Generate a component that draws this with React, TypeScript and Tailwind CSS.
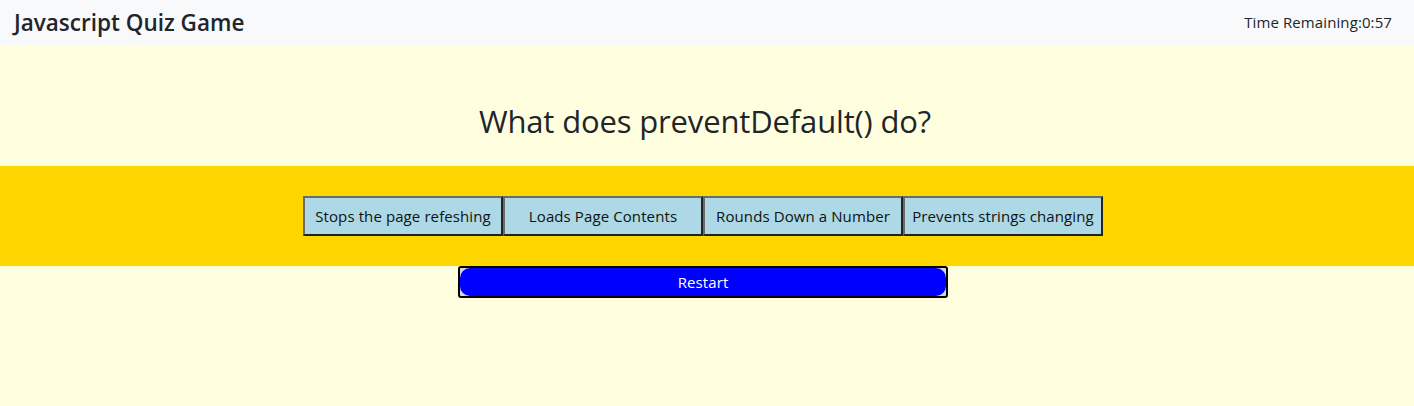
import React, { useState } from 'react';

const answers = [
  'Stops the page refeshing',
  'Loads Page Contents',
  'Rounds Down a Number',
  'Prevents strings changing',
];

const App: React.FC = () => {
  const [time] = useState('0:57');

  return (
    <div className="min-h-[406px] bg-[#ffffe0] text-[#212529] font-['Open_Sans','Noto_Sans',sans-serif]">
      {/* Navbar */}
      <nav className="h-[45px] bg-[#f8f9fa] flex items-center justify-between pl-[14px] pr-[22px]">
        <span className="text-[22.5px] font-semibold">Javascript Quiz Game</span>
        <span className="text-[15px] font-medium tracking-[0.1px]">Time Remaining:{time}</span>
      </nav>

      {/* Question */}
      <div className="h-[121px] pt-[32px] flex items-center justify-center pr-[4px]">
        <h2 className="text-[31px] font-normal tracking-[-0.15px]">What does preventDefault() do?</h2>
      </div>

      {/* Answers band */}
      <div className="h-[100px] bg-[#ffd700] flex items-center justify-center pr-[8px]">
        <div className="flex">
          {answers.map((a) => (
            <button
              key={a}
              className="w-[200px] h-[40px] bg-[#add8e6] border-2 border-t-[#6b6b6b] border-l-[#6b6b6b] border-b-[#222] border-r-[#222] text-[15px] tracking-[0.1px] text-[#111]"
            >
              {a}
            </button>
          ))}
        </div>
      </div>

      {/* Restart */}
      <div className="flex justify-center pr-[8px]">
        <div className="w-[490px] h-[32px] border-2 border-black rounded-[3px] bg-[#d8d8d8] overflow-hidden">
          <button className="w-full h-full bg-[#0000ff] rounded-[10px] text-white text-[15px] tracking-[0.1px]">
            Restart
          </button>
        </div>
      </div>
    </div>
  );
};

export default App;
